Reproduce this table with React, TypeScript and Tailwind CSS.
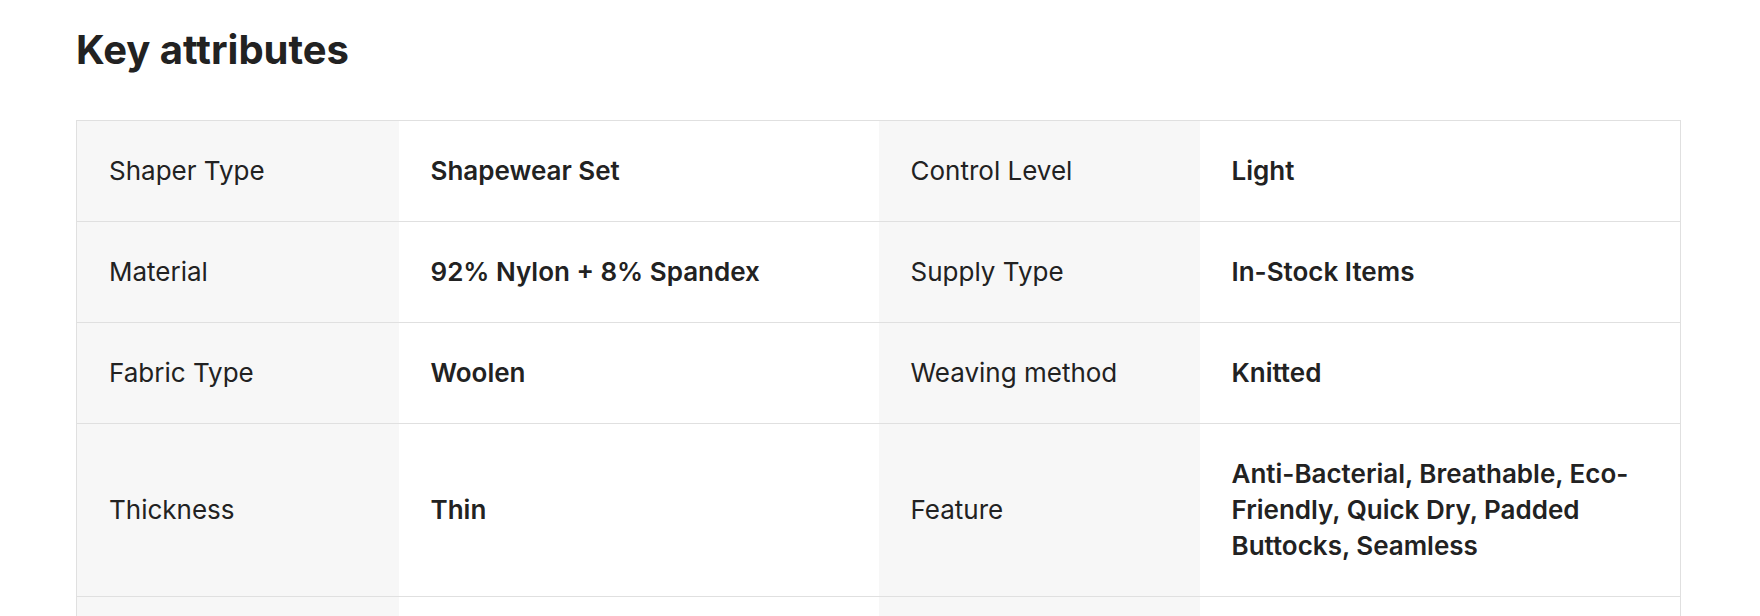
import React from 'react';

// Key attribute rows: [label, value, label, value]
const rows: [string, string, string, string][] = [
  ['Shaper Type', 'Shapewear Set', 'Control Level', 'Light'],
  ['Material', '92% Nylon + 8% Spandex', 'Supply Type', 'In-Stock Items'],
  ['Fabric Type', 'Woolen', 'Weaving method', 'Knitted'],
  ['Thickness', 'Thin', 'Feature', 'Anti-Bacterial, Breathable, Eco-Friendly, Quick Dry, Padded Buttocks, Seamless'],
];

function App() {
  return (
    <div className="min-h-screen bg-white px-[76px] pt-[26px] text-[#222222] font-['Inter',_'Liberation_Sans',_sans-serif]">
      <h1 className="text-[40px] leading-[48px] font-bold">Key attributes</h1>

      <table className="mt-[46px] w-[1605px] table-fixed border-collapse border border-[#e0e0e0]">
        <colgroup>
          <col className="w-[322px]" />
          <col className="w-[480px]" />
          <col className="w-[321px]" />
          <col />
        </colgroup>
        <tbody>
          {rows.map((r, i) => (
            <tr key={i} className="border-b border-[#e0e0e0]">
              <td className="bg-[#f7f7f7] px-8 py-8 align-middle text-[26px] leading-[36px] font-normal">{r[0]}</td>
              <td className="px-8 py-8 align-middle text-[26px] leading-[36px] font-semibold">{r[1]}</td>
              <td className="bg-[#f7f7f7] px-8 py-8 align-middle text-[26px] leading-[36px] font-normal">{r[2]}</td>
              <td className="px-8 py-8 align-middle text-[26px] leading-[36px] font-semibold">{r[3]}</td>
            </tr>
          ))}
          {/* next row, below the fold */}
          <tr className="border-b border-[#e0e0e0]">
            <td className="h-[100px] bg-[#f7f7f7]" />
            <td />
            <td className="bg-[#f7f7f7]" />
            <td />
          </tr>
        </tbody>
      </table>
    </div>
  );
}

export default App;
